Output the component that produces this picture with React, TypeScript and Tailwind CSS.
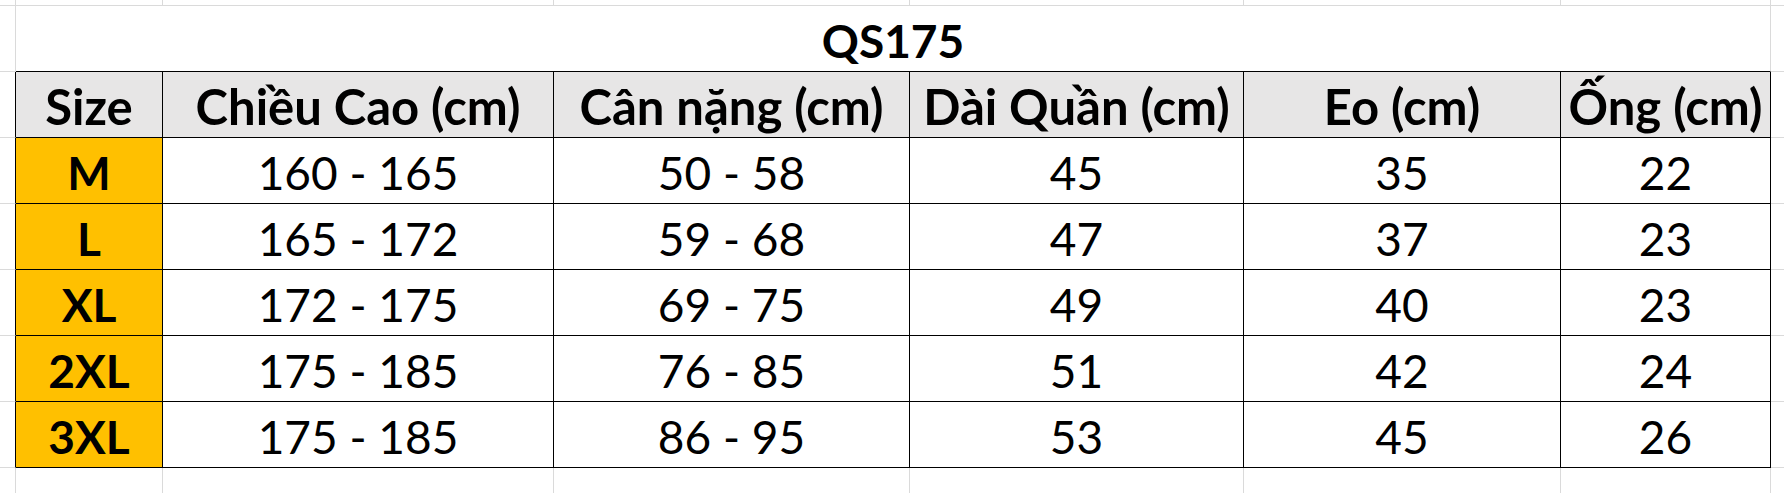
import React from "react";

const headers = ["Size", "Chiều Cao (cm)", "Cân nặng (cm)", "Dài Quần (cm)", "Eo (cm)", "Ống (cm)"];

const sizes = [
  ["M", "160 - 165", "50 - 58", "45", "35", "22"],
  ["L", "165 - 172", "59 - 68", "47", "37", "23"],
  ["XL", "172 - 175", "69 - 75", "49", "40", "23"],
  ["2XL", "175 - 185", "76 - 85", "51", "42", "24"],
  ["3XL", "175 - 185", "86 - 95", "53", "45", "26"],
];

// sheet gridline cell (empty)
const Blank = ({ right = true }: { right?: boolean }) => (
  <div className={right ? "border-r border-b border-[#dadada]" : "border-b border-[#dadada]"} />
);

const App = () => {
  return (
    <div className="w-[1784px] h-[493px] overflow-hidden bg-white text-black font-['Lato',sans-serif]">
      <div className="grid h-full grid-cols-[16px_147px_391px_356px_334px_317px_210px_1fr] grid-rows-[6px_66px_66px_66px_66px_66px_66px_66px_1fr]">
        {/* row above the sheet block */}
        {[0, 1, 2, 3, 4, 5, 6].map((i) => (
          <Blank key={"t" + i} />
        ))}
        <Blank right={false} />

        {/* title */}
        <Blank />
        <div className="col-span-6 flex items-center justify-center border-r border-r-[#dadada] border-b border-b-black pt-1 text-[46px] font-bold leading-none">
          QS175
        </div>
        <Blank right={false} />

        {/* header */}
        <div className="border-r border-r-black border-b border-b-[#dadada]" />
        {headers.map((h) => (
          <div
            key={h}
            className="flex items-center justify-center border-r border-b border-black bg-[#e7e6e6] pt-1 text-[49px] font-bold leading-none whitespace-nowrap"
          >
            {h}
          </div>
        ))}
        <Blank right={false} />

        {sizes.map((row) => (
          <React.Fragment key={row[0]}>
            <div className="border-r border-r-black border-b border-b-[#dadada]" />
            {row.map((v, i) => (
              <div
                key={i}
                className={
                  i === 0
                    ? "flex items-center justify-center border-r border-b border-black bg-[#ffc000] pt-1 text-[46px] font-bold leading-none"
                    : "flex items-center justify-center border-r border-b border-black pt-1 text-[46px] leading-none"
                }
              >
                {v}
              </div>
            ))}
            <Blank right={false} />
          </React.Fragment>
        ))}

        {/* rows below the table */}
        {[0, 1, 2, 3, 4, 5, 6].map((i) => (
          <div key={"b" + i} className="border-r border-[#dadada]" />
        ))}
        <div />
      </div>
    </div>
  );
};

export default App;
